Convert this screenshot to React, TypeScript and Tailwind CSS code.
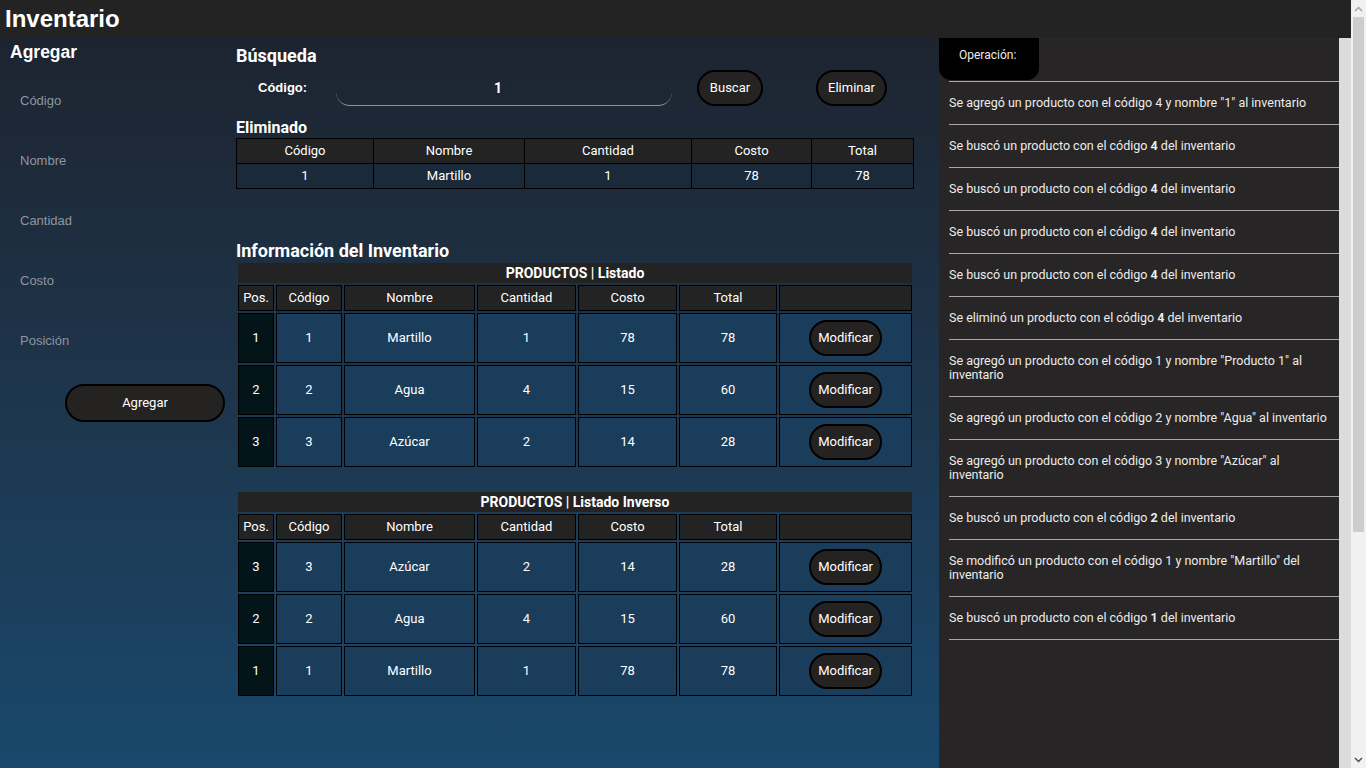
import type { ReactNode } from 'react';

const body = { fontFamily: 'Roboto, "Noto Sans", sans-serif' };
const arial = { fontFamily: '"Liberation Sans", Arial, sans-serif' };

const productos = [
  { pos: 1, codigo: 1, nombre: 'Martillo', cantidad: 1, costo: 78, total: 78 },
  { pos: 2, codigo: 2, nombre: 'Agua', cantidad: 4, costo: 15, total: 60 },
  { pos: 3, codigo: 3, nombre: 'Azúcar', cantidad: 2, costo: 14, total: 28 },
];

const operaciones: ReactNode[] = [
  <>Se agregó un producto con el código 4 y nombre "1" al inventario</>,
  <>Se buscó un producto con el código <b>4</b> del inventario</>,
  <>Se buscó un producto con el código <b>4</b> del inventario</>,
  <>Se buscó un producto con el código <b>4</b> del inventario</>,
  <>Se buscó un producto con el código <b>4</b> del inventario</>,
  <>Se eliminó un producto con el código <b>4</b> del inventario</>,
  <>Se agregó un producto con el código 1 y nombre "Producto 1" al inventario</>,
  <>Se agregó un producto con el código 2 y nombre "Agua" al inventario</>,
  <>Se agregó un producto con el código 3 y nombre "Azúcar" al inventario</>,
  <>Se buscó un producto con el código <b>2</b> del inventario</>,
  <>Se modificó un producto con el código 1 y nombre "Martillo" del inventario</>,
  <>Se buscó un producto con el código <b>1</b> del inventario</>,
];

function Boton({ children, className = '' }: { children: ReactNode; className?: string }) {
  return (
    <button
      className={`rounded-full border-2 border-black bg-[#252322] text-[13px] text-white ${className}`}
      style={body}
    >
      {children}
    </button>
  );
}

function TablaProductos({ titulo, filas }: { titulo: string; filas: typeof productos }) {
  const th = 'border border-black bg-[#232323] h-[26px] font-normal';
  const td = 'border border-black bg-[#1a3d5b] h-[50px]';
  return (
    <table className="w-[678px] border-separate border-spacing-[2px] text-center text-[13px] text-white">
      <caption className="bg-[#232323] mx-[2px] h-[20px] leading-[20px] text-[14px] font-bold">{titulo}</caption>
      <thead>
        <tr>
          <th className={`${th} w-[36px]`}>Pos.</th>
          <th className={`${th} w-[66px]`}>Código</th>
          <th className={`${th} w-[131px]`}>Nombre</th>
          <th className={`${th} w-[99px]`}>Cantidad</th>
          <th className={`${th} w-[99px]`}>Costo</th>
          <th className={`${th} w-[98px]`}>Total</th>
          <th className={th}></th>
        </tr>
      </thead>
      <tbody>
        {filas.map((p) => (
          <tr key={p.pos}>
            <td className="border border-black bg-[#031519] h-[50px]">{p.pos}</td>
            <td className={td}>{p.codigo}</td>
            <td className={td}>{p.nombre}</td>
            <td className={td}>{p.cantidad}</td>
            <td className={td}>{p.costo}</td>
            <td className={td}>{p.total}</td>
            <td className={td}>
              <Boton className="w-[73px] h-[36px]">Modificar</Boton>
            </td>
          </tr>
        ))}
      </tbody>
    </table>
  );
}

// imitación de la barra de desplazamiento del navegador
function Scrollbar() {
  return (
    <div className="w-[15px] h-[768px] shrink-0 bg-[#f1f1f1] flex flex-col">
      <div className="h-[17px] flex items-center justify-center text-[#a3a3a3]">
        <svg width="9" height="6" viewBox="0 0 9 6"><path d="M1 5 L4.5 1.5 L8 5" fill="none" stroke="currentColor" strokeWidth="1.5" /></svg>
      </div>
      <div className="mx-[2px] h-[515px] bg-[#cdcdcd]" />
      <div className="flex-1" />
      <div className="h-[17px] flex items-center justify-center text-[#505050]">
        <svg width="9" height="6" viewBox="0 0 9 6"><path d="M1 1 L4.5 4.5 L8 1" fill="none" stroke="currentColor" strokeWidth="1.5" /></svg>
      </div>
    </div>
  );
}

export default function App() {
  return (
    <div className="h-[768px] overflow-hidden flex" style={body}>
      <div className="w-[1351px] bg-[#dcdcdc] flex flex-col">
        {/* Header */}
        <header className="h-[38px] shrink-0 bg-[#232323] pl-[5px] text-white">
          <h1 className="text-[24px] font-bold leading-[38px]" style={arial}>Inventario</h1>
        </header>

        <div className="flex items-start">
          {/* Main */}
          <main className="w-[939px] h-[730px] flex bg-gradient-to-b from-[#1d2430] to-[#18486c] text-white">
            {/* Agregar */}
            <section className="w-[236px] pt-[4px]">
              <h2 className="pl-[10px] text-[17.5px] font-bold leading-[20px]" style={arial}>Agregar</h2>
              <div className="flex flex-col gap-[24px] pt-[20px] pl-[20px]">
                {['Código', 'Nombre', 'Cantidad', 'Costo', 'Posición'].map((p) => (
                  <input
                    key={p}
                    placeholder={p}
                    className="h-[36px] w-[190px] bg-transparent text-[13px] text-white placeholder:text-[#8d96a0] outline-none"
                    style={arial}
                  />
                ))}
              </div>
              <Boton className="ml-[65px] mt-[26px] w-[160px] h-[38px]">Agregar</Boton>
            </section>

            {/* Búsqueda e inventario */}
            <section className="flex-1 pt-[7px]">
              <h2 className="text-[18px] font-bold leading-[22px]">Búsqueda</h2>
              <div className="flex items-center mt-[3px] h-[36px]">
                <span className="w-[100px] pl-[22px] text-[13px] font-bold" style={arial}>Código:</span>
                <input
                  defaultValue="1"
                  className="h-[36px] w-[336px] rounded-[14px] border-b border-[#8a95a2] bg-transparent pr-[12px] text-center text-[14px] font-bold text-white outline-none"
                />
                <Boton className="ml-[25px] w-[66px] h-[36px]">Buscar</Boton>
                <Boton className="ml-[53px] w-[71px] h-[36px]">Eliminar</Boton>
              </div>

              <h3 className="mt-[12px] text-[16px] font-bold leading-[20px]">Eliminado</h3>
              <table className="w-[678px] border-collapse text-center text-[13px]">
                <thead>
                  <tr className="bg-[#232323]">
                    <th className="border border-black h-[25px] w-[137px] font-normal">Código</th>
                    <th className="border border-black w-[151px] font-normal">Nombre</th>
                    <th className="border border-black w-[167px] font-normal">Cantidad</th>
                    <th className="border border-black w-[120px] font-normal">Costo</th>
                    <th className="border border-black font-normal">Total</th>
                  </tr>
                </thead>
                <tbody>
                  <tr className="bg-[#1b2a3a]">
                    <td className="border border-black h-[25px]">1</td>
                    <td className="border border-black">Martillo</td>
                    <td className="border border-black">1</td>
                    <td className="border border-black">78</td>
                    <td className="border border-black">78</td>
                  </tr>
                </tbody>
              </table>

              <h2 className="mt-[51px] text-[18px] font-bold leading-[22px]">Información del Inventario</h2>
              <div className="mt-[1px]">
                <TablaProductos titulo="PRODUCTOS | Listado" filas={productos} />
              </div>
              <div className="mt-[23px]">
                <TablaProductos titulo="PRODUCTOS | Listado Inverso" filas={[...productos].reverse()} />
              </div>
            </section>
          </main>

          {/* Operaciones */}
          <aside className="w-[400px] h-[730px] bg-[#272526] text-[#ececec]">
            <div className="w-[100px] h-[42px] rounded-b-[12px] bg-black pl-[20px] pt-[8px] text-[12px]">Operación:</div>
            <ul className="ml-[10px] mt-[1px] border-t border-[#a9a9a9]">
              {operaciones.map((op, i) => (
                <li key={i} className="border-b border-[#a9a9a9] py-[14px] pr-[6px] text-[12.5px] leading-[14px]">
                  {op}
                </li>
              ))}
            </ul>
          </aside>
        </div>
      </div>
      <Scrollbar />
    </div>
  );
}
